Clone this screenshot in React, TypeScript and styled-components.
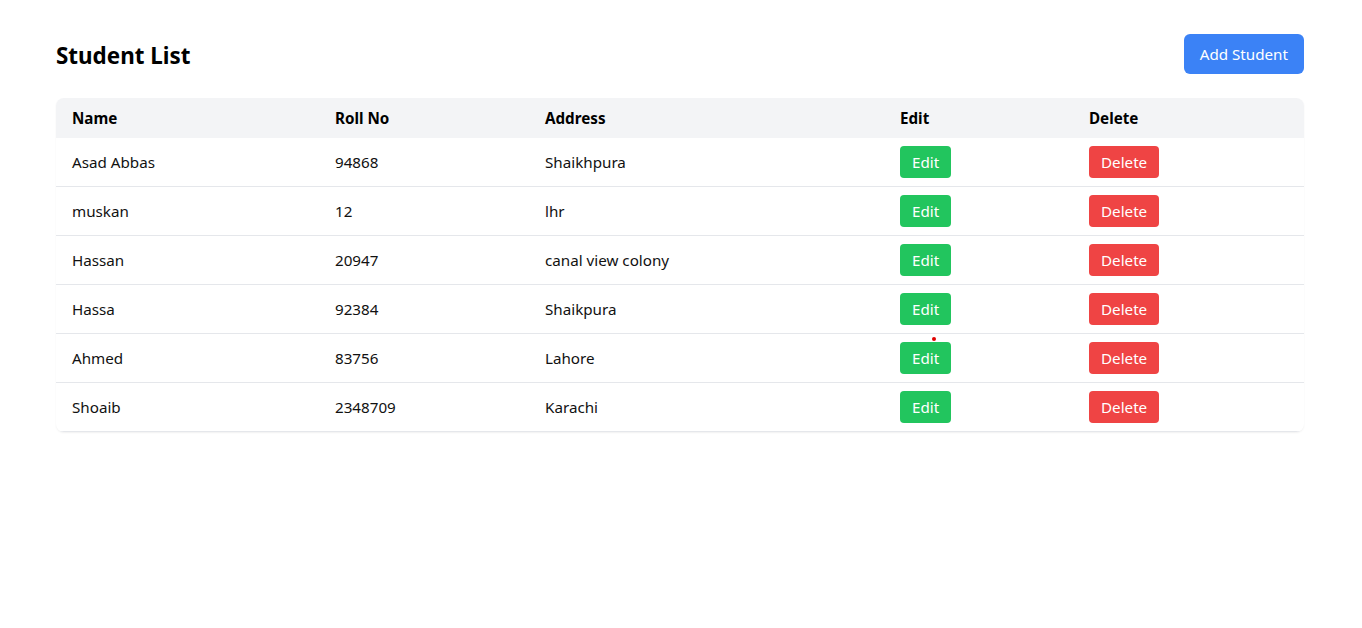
import React from "react";
import styled, { createGlobalStyle } from "styled-components";

const GlobalStyle = createGlobalStyle`
  html, body { margin: 0; padding: 0; background: #ffffff; }
  body { font-family: "Segoe UI", "Noto Sans", "Open Sans", sans-serif; color: #111827; }
  * { box-sizing: border-box; }
`;

const Page = styled.div`
  padding: 34px 58px 0 56px;
  min-height: 628px;
  position: relative;
`;

const TopBar = styled.div`
  display: flex;
  justify-content: space-between;
  align-items: center;
  height: 40px;
  margin-bottom: 24px;
`;

const Title = styled.h1`
  margin: 0;
  padding-top: 3px;
  font-size: 22.4px;
  font-weight: 700;
  color: #000;
  line-height: 32px;
`;

const PrimaryButton = styled.button`
  height: 40px;
  padding: 0 16px;
  border: none;
  border-radius: 6px;
  background: #3b82f6;
  color: #fff;
  font-family: inherit;
  font-size: 15.2px;
  cursor: pointer;
`;

const TableWrap = styled.div`
  border-radius: 8px;
  overflow: hidden;
  box-shadow: 0 1px 2px rgba(0, 0, 0, 0.06);
`;

const Table = styled.table`
  width: 100%;
  border-collapse: separate;
  border-spacing: 0;
  table-layout: fixed;
`;

const HeadRow = styled.tr`
  background: #f3f4f6;
`;

const Th = styled.th<{ $w: number }>`
  width: ${(p) => p.$w}px;
  height: 40px;
  text-align: left;
  padding: 0 16px;
  font-size: 15.2px;
  font-weight: 700;
  color: #000;
`;

const Td = styled.td`
  height: 49px;
  padding: 0 16px;
  border-bottom: 1px solid #e5e7eb;
  font-size: 15.2px;
  color: #111;
  vertical-align: middle;
`;

const ActionButton = styled.button<{ $kind: "edit" | "delete" }>`
  height: 32px;
  padding: 0 12px;
  border: none;
  border-radius: 4px;
  background: ${(p) => (p.$kind === "edit" ? "#22c55e" : "#ef4444")};
  color: #fff;
  font-family: inherit;
  font-size: 15.2px;
  cursor: pointer;
  position: relative;
  display: inline-flex;
  align-items: center;
`;

const Dot = styled.span`
  position: absolute;
  top: -5px;
  left: 32px;
  width: 4px;
  height: 4px;
  border-radius: 50%;
  background: #e00000;
`;

const students = [
  { name: "Asad Abbas", roll: "94868", address: "Shaikhpura" },
  { name: "muskan", roll: "12", address: "lhr" },
  { name: "Hassan", roll: "20947", address: "canal view colony" },
  { name: "Hassa", roll: "92384", address: "Shaikpura" },
  { name: "Ahmed", roll: "83756", address: "Lahore" },
  { name: "Shoaib", roll: "2348709", address: "Karachi" },
];

export default function App() {
  return (
    <>
      <GlobalStyle />
      <Page>
        <TopBar>
          <Title>Student List</Title>
          <PrimaryButton>Add Student</PrimaryButton>
        </TopBar>
        <TableWrap>
          <Table>
            <thead>
              <HeadRow>
                <Th $w={263}>Name</Th>
                <Th $w={210}>Roll No</Th>
                <Th $w={355}>Address</Th>
                <Th $w={189}>Edit</Th>
                <Th $w={231}>Delete</Th>
              </HeadRow>
            </thead>
            <tbody>
              {students.map((s, i) => (
                <tr key={i}>
                  <Td>{s.name}</Td>
                  <Td>{s.roll}</Td>
                  <Td>{s.address}</Td>
                  <Td>
                    <ActionButton $kind="edit">
                      {i === 4 && <Dot />}
                      Edit
                    </ActionButton>
                  </Td>
                  <Td>
                    <ActionButton $kind="delete">Delete</ActionButton>
                  </Td>
                </tr>
              ))}
            </tbody>
          </Table>
        </TableWrap>
      </Page>
    </>
  );
}
